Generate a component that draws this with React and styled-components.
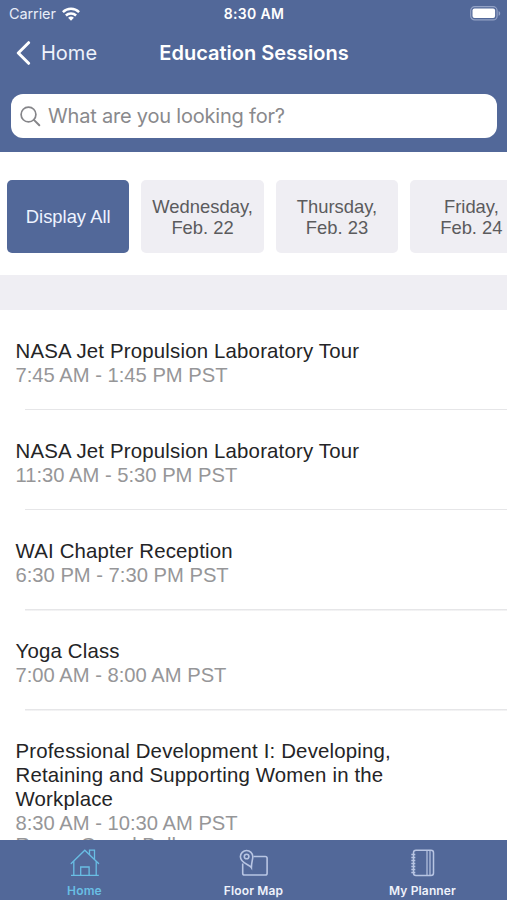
import React from "react";
import styled, { createGlobalStyle } from "styled-components";

const days = [
  { label: ["Display All"], active: true },
  { label: ["Wednesday,", "Feb. 22"] },
  { label: ["Thursday,", "Feb. 23"] },
  { label: ["Friday,", "Feb. 24"] },
];

const sessions = [
  { title: ["NASA Jet Propulsion Laboratory Tour"], time: "7:45 AM - 1:45 PM PST" },
  { title: ["NASA Jet Propulsion Laboratory Tour"], time: "11:30 AM - 5:30 PM PST" },
  { title: ["WAI Chapter Reception"], time: "6:30 PM - 7:30 PM PST" },
  { title: ["Yoga Class"], time: "7:00 AM - 8:00 AM PST" },
  {
    title: [
      "Professional Development I: Developing,",
      "Retaining and Supporting Women in the",
      "Workplace",
    ],
    time: "8:30 AM - 10:30 AM PST",
    room: "Room: Grand Ballroom",
  },
];

function WifiIcon() {
  return (
    <svg width="18" height="14" viewBox="0 0 18 14" fill="none" stroke="#fff" strokeWidth="2.5">
      <path d="M0.9 5.1a11.6 11.6 0 0 1 16.2 0" />
      <path d="M3.9 8.5a7.3 7.3 0 0 1 10.2 0" />
      <path d="M9 13.8 6.1 10.8a4.2 4.2 0 0 1 5.8 0z" fill="#fff" stroke="none" />
    </svg>
  );
}

function BatteryIcon() {
  return (
    <svg width="31" height="15" viewBox="0 0 31 15" fill="none">
      <rect x="0.7" y="0.7" width="26.4" height="13.2" rx="4" stroke="#93a2c6" strokeWidth="1.2" />
      <rect x="2.5" y="2.5" width="22.6" height="9.6" rx="2" fill="#fff" />
      <path d="M28.6 5v4.8c1-.4 1.6-1.3 1.6-2.4s-.6-2-1.6-2.4z" fill="#93a2c6" />
    </svg>
  );
}

function BackIcon() {
  return (
    <svg width="15" height="24" viewBox="0 0 15 24" fill="none" stroke="#fff" strokeWidth="3">
      <path d="M12.6 1.7 2.3 12l10.3 10.3" strokeLinecap="round" strokeLinejoin="round" />
    </svg>
  );
}

function SearchIcon() {
  return (
    <svg width="21" height="21" viewBox="0 0 21 21" fill="none" stroke="#858589" strokeWidth="1.7">
      <circle cx="8.5" cy="8.5" r="7.4" />
      <path d="m13.9 13.9 5.4 5.4" strokeWidth="2" strokeLinecap="round" />
    </svg>
  );
}

function HomeIcon() {
  return (
    <svg width="30" height="28" viewBox="0 0 30 28" fill="none" stroke="#69bee4" strokeWidth="1.3">
      <path d="M1.2 14.5 14.8 1.2l13.8 13.3" strokeLinecap="round" />
      <path d="M19.5 5.7V1.2h5v9.2M3.8 12.2v14M26.2 12.2v14M1 26.3h27.8" />
      <path d="M10.7 26V18h8.4v8" />
    </svg>
  );
}

function MapIcon() {
  return (
    <svg width="30" height="28" viewBox="0 0 30 28" fill="none" stroke="#b8c5e3" strokeWidth="1.6">
      <path d="M14.5 7.5h11.8a1.8 1.8 0 0 1 1.8 1.8v14.9a1.8 1.8 0 0 1-1.8 1.8H5.500a1.800 1.800 0 0 1-1.800-1.800V14.500" />
      <path d="M12.400 18.600C10.800 15.800 1.400 14.200 1.400 7.700a6.200 6.200 0 0 1 12.400 0c0 3.200-1.400 5.500-1.400 10.900z" />
      <circle cx="7.600" cy="7.500" r="2.300" />
    </svg>
  );
}

function PlannerIcon() {
  return (
    <svg width="26" height="28" viewBox="0 0 26 28" fill="none" stroke="#b8c5e3" strokeWidth="1.5">
      <rect x="3.5" y="1.2" width="20" height="25.4" rx="2.5" />
      <path d="M17 1.2v25.4M20 1.2v25.4" strokeWidth="1.2" />
      <path d="M1.3 5.5h4M1.3 8.5h4M1.3 11.5h4M1.3 14.5h4M1.3 17.5h4M1.3 20.5h4M1.3 23.5h4" />
    </svg>
  );
}

function App() {
  return (
    <Screen>
      <GlobalStyle />
      <Header>
        <StatusBar>
          <Carrier>
            Carrier <WifiIcon />
          </Carrier>
          <Clock>8:30 AM</Clock>
          <BatteryIcon />
        </StatusBar>
        <NavBar>
          <BackButton>
            <BackIcon />
            <span>Home</span>
          </BackButton>
          <NavTitle>Education Sessions</NavTitle>
        </NavBar>
        <SearchBox>
          <SearchIcon />
          <span>What are you looking for?</span>
        </SearchBox>
      </Header>
      <DayList>
        {days.map((day) => (
          <DayButton key={day.label[0]} $active={day.active}>
            {day.label.map((line) => (
              <span key={line}>{line}</span>
            ))}
          </DayButton>
        ))}
      </DayList>
      <SectionGap />
      <SessionList>
        {sessions.map((session) => (
          <Session key={session.title[0] + session.time}>
            {session.title.map((line) => (
              <SessionTitle key={line}>{line}</SessionTitle>
            ))}
            <SessionInfo>{session.time}</SessionInfo>
            {session.room && <SessionInfo>{session.room}</SessionInfo>}
          </Session>
        ))}
      </SessionList>
      <TabBar>
        <Tab $active>
          <HomeIcon />
          <span>Home</span>
        </Tab>
        <Tab>
          <MapIcon />
          <span>Floor Map</span>
        </Tab>
        <Tab>
          <PlannerIcon />
          <span>My Planner</span>
        </Tab>
      </TabBar>
    </Screen>
  );
}

const GlobalStyle = createGlobalStyle`
  * {
    box-sizing: border-box;
  }
  body {
    margin: 0;
    overflow: hidden;
  }
`;

const Screen = styled.div`
  display: flex;
  flex-direction: column;
  width: 507px;
  height: 900px;
  overflow: hidden;
  background: #fff;
  font-family: "Liberation Sans", Arial, sans-serif;
  white-space: nowrap;
`;

const Header = styled.header`
  flex: none;
  height: 152px;
  background: #526899;
  color: #fff;
  font-family: Inter, sans-serif;
`;

const StatusBar = styled.div`
  display: grid;
  grid-template-columns: 1fr auto 1fr;
  align-items: center;
  height: 27px;
  padding: 0 6px 0 9px;
  > svg {
    justify-self: end;
  }
`;

const Carrier = styled.div`
  display: flex;
  align-items: center;
  gap: 6px;
  font-size: 14.5px;
  letter-spacing: -0.1px;
  color: #e8edf8;
`;

const Clock = styled.div`
  margin-right: 2px;
  font-size: 14px;
  font-weight: 600;
  letter-spacing: 0.35px;
`;

const NavBar = styled.div`
  display: grid;
  grid-template-columns: 1fr auto 1fr;
  align-items: center;
  height: 51px;
  padding: 0 15px 0 16px;
`;

const BackButton = styled.div`
  display: flex;
  align-items: center;
  gap: 10px;
  font-size: 20px;
  color: #eef2fb;
`;

const NavTitle = styled.div`
  font-size: 20px;
  font-weight: 600;
`;

const SearchBox = styled.div`
  display: flex;
  align-items: center;
  gap: 7px;
  height: 44px;
  margin: 16px 10px 0 11px;
  padding: 0 9px;
  border-radius: 12px;
  background: #fff;
  color: #89898c;
  font-size: 20px;
  letter-spacing: -0.2px;
`;

const DayList = styled.div`
  display: flex;
  flex: none;
  gap: 12px;
  height: 123px;
  padding: 28px 0 22px 7px;
  overflow: hidden;
`;

const DayButton = styled.div`
  display: flex;
  flex: none;
  flex-direction: column;
  align-items: center;
  justify-content: center;
  width: 122.4px;
  border-radius: 5px;
  background: ${({ $active }) => ($active ? "#526899" : "#efeef3")};
  color: ${({ $active }) => ($active ? "#eef3ff" : "#5b5b5d")};
  font-size: 18.4px;
  line-height: 21px;
`;

const SectionGap = styled.div`
  flex: none;
  height: 35px;
  background: #efeef3;
`;

const SessionList = styled.div`
  flex: 1;
  min-height: 0;
  overflow: hidden;
`;

const Session = styled.div`
  height: 100.2px;
  padding: 29.6px 0 0 15.5px;
  &:not(:last-child) {
    background: linear-gradient(#e6e6e8, #e6e6e8) 25px 100% / 100% 1.5px no-repeat;
  }
`;

const SessionTitle = styled.div`
  font-size: 20.4px;
  line-height: 23.9px;
  letter-spacing: 0.18px;
  color: #242426;
`;

const SessionInfo = styled.div`
  font-size: 20.2px;
  line-height: 22.4px;
  color: #969698;
`;

const TabBar = styled.nav`
  display: grid;
  grid-template-columns: repeat(3, 1fr);
  flex: none;
  height: 60px;
  background: #526899;
  font-family: Inter, sans-serif;
  font-size: 12px;
  font-weight: 600;
  letter-spacing: 0.15px;
`;

const Tab = styled.div`
  display: flex;
  flex-direction: column;
  align-items: center;
  padding-top: 9px;
  color: ${({ $active }) => ($active ? "#69bee4" : "#eef2fb")};
  span {
    margin-top: 6px;
    line-height: 15px;
  }
`;

export default App;
